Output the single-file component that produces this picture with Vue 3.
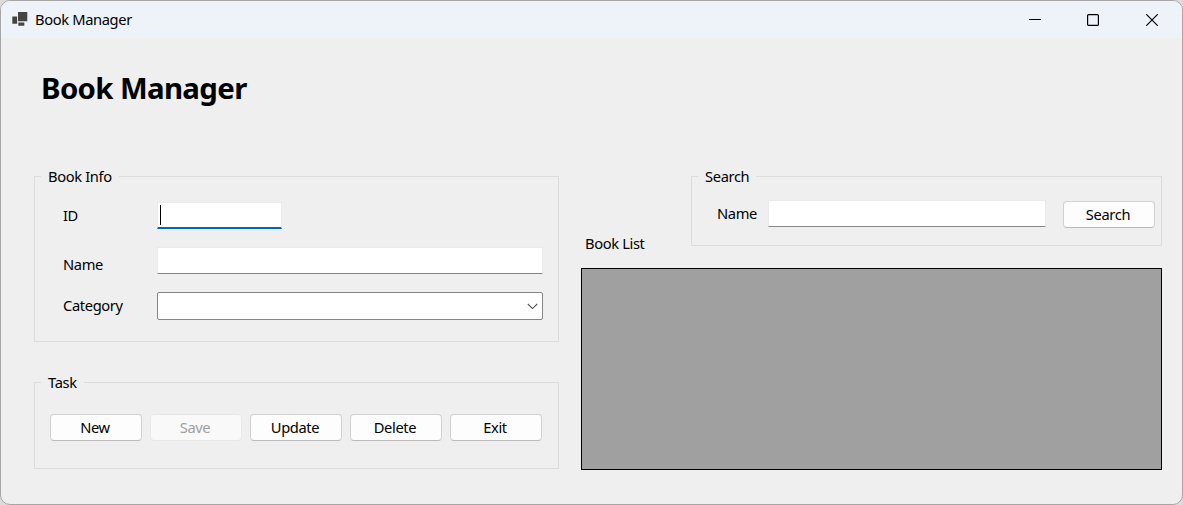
<script setup>
const tasks = [
  { label: 'New' },
  { label: 'Save', disabled: true },
  { label: 'Update' },
  { label: 'Delete' },
  { label: 'Exit' },
]
</script>

<template>
  <div class="desktop">
    <main class="window">
      <header class="titlebar">
        <svg class="app-icon" width="16" height="16" viewBox="0 0 16 16">
          <path d="M6 0h9.3v9.3H6zM0.3 4.5h4.8v7.2H0.3zM6.3 10.4h6v3.4h-6z" fill="#444" />
        </svg>
        <span class="caption">Book Manager</span>
        <div class="controls">
          <svg width="12" height="12" viewBox="0 0 12 12"><path d="M0 5.5h12" /></svg>
          <svg width="12" height="12" viewBox="0 0 12 12"><rect x="0.6" y="0.6" width="10.8" height="10.8" rx="1" /></svg>
          <svg width="12" height="12" viewBox="0 0 12 12"><path d="M0.3 0.3l11.4 11.4M11.7 0.3L0.3 11.7" /></svg>
        </div>
      </header>

      <h1>Book Manager</h1>

      <div class="columns">
        <section class="left">
          <div class="group info">
            <div class="legend"><span>Book Info</span></div>
            <div class="row id-row"><label>ID</label><div class="field focused"><i class="caret"></i></div></div>
            <div class="row name-row"><label>Name</label><div class="field"></div></div>
            <div class="row cat-row">
              <label>Category</label>
              <div class="combo">
                <svg width="11" height="7" viewBox="0 0 11 7"><path d="M0.8 1l4.7 4.6L10.2 1" /></svg>
              </div>
            </div>
          </div>
          <div class="group task">
            <div class="legend"><span>Task</span></div>
            <div class="buttons">
              <button v-for="t in tasks" :key="t.label" :disabled="t.disabled">{{ t.label }}</button>
            </div>
          </div>
        </section>

        <section class="right">
          <div class="group search">
            <div class="legend"><span>Search</span></div>
            <div class="search-row">
              <label>Name</label>
              <div class="field"></div>
              <button>Search</button>
            </div>
          </div>
          <div class="list-label">Book List</div>
          <div class="list"></div>
        </section>
      </div>
    </main>
  </div>
</template>

<style>
body { margin: 0; overflow: hidden; }
</style>

<style scoped>
* { box-sizing: border-box; }
.desktop {
  width: 1183px;
  height: 505px;
  background: #dcdcdc;
  font: 14.7px/20px "Segoe UI", "Noto Sans", "Open Sans", sans-serif;
  letter-spacing: -0.36px;
  color: #000;
}
.window {
  height: 505px;
  border: 1px solid #a6a6a6;
  border-radius: 10px;
  background: #efefef;
  overflow: hidden;
}
.titlebar {
  display: flex;
  align-items: center;
  height: 37px;
  padding: 0 24px 0 11px;
  background: #eef3f9;
}
.app-icon { margin-right: 7px; }
.caption { margin-bottom: 2px; }
.controls { display: flex; gap: 47px; margin-left: auto; }
.controls svg { fill: none; stroke: #000; stroke-width: 1.2; }
.controls svg:first-child { margin-right: -1px; }
.controls svg:first-child path { stroke-width: 1; }
h1 {
  margin: 30px 0 0 40px;
  font-size: 29.4px;
  line-height: 40px;
  font-weight: 700;
  letter-spacing: -0.65px;
}
.columns { display: flex; gap: 22px; padding: 68px 20px 0 33px; }
.left { width: 525px; }
.right { width: 581px; }
.group { border: 1px solid #dcdcdc; }
.legend { height: 20px; margin: -11px 0 0 6px; }
.legend span {
  display: block;
  width: max-content;
  padding: 0 7px;
  background: #efefef;
}
.info { height: 166px; }
.row { display: flex; align-items: flex-start; padding-left: 28px; }
.row label { width: 94px; }
.field {
  height: 27px;
  background: #fff;
  border: 1px solid #eaeaea;
  border-bottom-color: #868686;
  border-radius: 1px;
}
.id-row { margin-top: 16px; }
.id-row label { padding-top: 3px; }
.id-row .field { width: 125px; }
.focused {
  border-bottom: 2px solid #0067c0;
  border-radius: 0;
  padding: 2px 0 0 2px;
}
.caret { display: block; width: 1px; height: 20px; background: #000; }
.name-row { margin-top: 18px; }
.name-row label { padding-top: 7px; }
.name-row .field { width: 386px; }
.cat-row { margin-top: 18px; }
.cat-row label { padding-top: 3px; }
.combo {
  display: flex;
  align-items: center;
  justify-content: flex-end;
  width: 386px;
  height: 28px;
  padding-right: 4px;
  border: 1px solid #868686;
  border-radius: 2px;
  background: #fff;
}
.combo svg { fill: none; stroke: #555; stroke-width: 1.1; }
.task { height: 87px; margin-top: 40px; }
.buttons { display: flex; gap: 8px; margin: 22px 0 0 15px; }
button {
  width: 92px;
  height: 27px;
  padding: 0 2px 2px 0;
  border: 1px solid #d0d0d0;
  border-bottom-color: #bababa;
  border-radius: 4px;
  background: #fdfdfd;
  font: inherit;
  letter-spacing: inherit;
  color: #000;
}
button:disabled { color: #a0a0a0; background: #f9f9f9; border-color: #e7e7e7; }
.search { width: 471px; height: 70px; margin-left: 110px; }
.search-row { display: flex; margin: 14px 0 0 25px; }
.search-row label { width: 51px; padding-top: 3px; }
.search-row .field { width: 278px; }
.search-row button { margin: 1px 0 0 17px; }
.list-label { margin: -13px 0 0 4px; }
.list { height: 202px; margin-top: 15px; border: 1px solid #000; background: #a0a0a0; }
</style>
